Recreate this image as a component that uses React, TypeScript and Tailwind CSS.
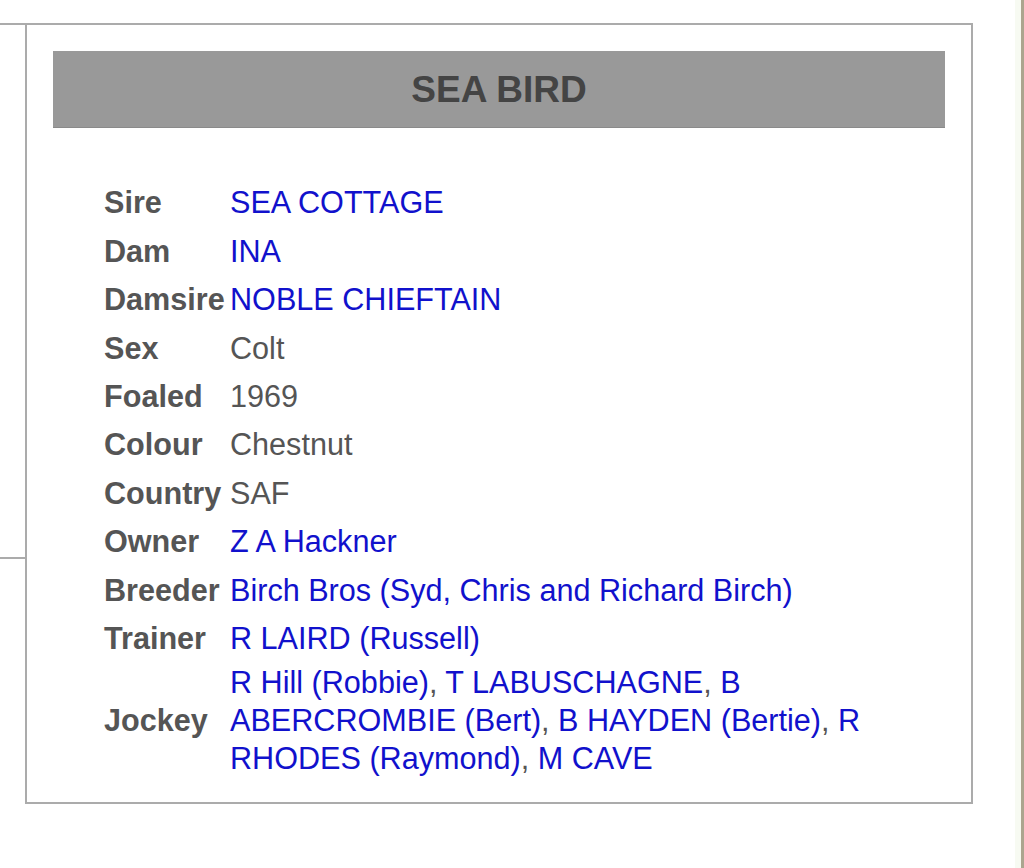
const rows: { label: string; value: string; link?: boolean }[] = [
  { label: 'Sire', value: 'SEA COTTAGE', link: true },
  { label: 'Dam', value: 'INA', link: true },
  { label: 'Damsire', value: 'NOBLE CHIEFTAIN', link: true },
  { label: 'Sex', value: 'Colt' },
  { label: 'Foaled', value: '1969' },
  { label: 'Colour', value: 'Chestnut' },
  { label: 'Country', value: 'SAF' },
  { label: 'Owner', value: 'Z A Hackner', link: true },
  { label: 'Breeder', value: 'Birch Bros (Syd, Chris and Richard Birch)', link: true },
  { label: 'Trainer', value: 'R LAIRD (Russell)', link: true },
];

const jockeys = [
  'R Hill (Robbie)',
  'T LABUSCHAGNE',
  'B ABERCROMBIE (Bert)',
  'B HAYDEN (Bertie)',
  'R RHODES (Raymond)',
  'M CAVE',
];

export default function App() {
  return (
    <div className="flex h-[868px] w-[1024px] overflow-hidden bg-white font-['Liberation_Sans',Arial,sans-serif]">
      <div className="flex flex-1 items-start pt-[23px]">
        {/* edge of the previous panel */}
        <div className="h-[536px] w-[25px] border-y-2 border-[#ababab]" />

        <div className="w-[948px] border-2 border-[#ababab] px-[26px] pb-[24px] pt-[26px]">
          <div className="flex h-[76px] items-center justify-center bg-[#999999] shadow-[0_1px_0_#8a8a8a]">
            <h1 className="text-[37px] font-bold leading-none text-[#444444]">SEA BIRD</h1>
          </div>

          <div className="ml-[51px] mt-[51px] w-[790px] text-[30.6px] leading-[38px]">
            {rows.map((r) => (
              <div key={r.label} className="flex h-[48.44px] items-center">
                <div className="w-[126px] shrink-0 font-bold text-[#555555]">{r.label}</div>
                <div className={r.link ? 'text-[#1111cc]' : 'text-[#555555]'}>{r.value}</div>
              </div>
            ))}
            <div className="flex items-center py-[1px]">
              <div className="w-[126px] shrink-0 font-bold text-[#555555]">Jockey</div>
              <p className="w-[664px] text-[#555555]">
                <a className="text-[#1111cc]">R Hill (Robbie)</a>, <a className="text-[#1111cc]">T LABUSCHAGNE</a>,{' '}
                <a className="text-[#1111cc]">B ABERCROMBIE (Bert)</a>, <a className="text-[#1111cc]">B HAYDEN (Bertie)</a>,{' '}
                <a className="text-[#1111cc]">R RHODES (Raymond)</a>, <a className="text-[#1111cc]">M CAVE</a>
              </p>
            </div>
          </div>
        </div>
      </div>
      <div className="h-full w-[6px] bg-[#f7faf2]" />
      <div className="h-full w-[3px] bg-[#aba58f]" />
    </div>
  );
}
